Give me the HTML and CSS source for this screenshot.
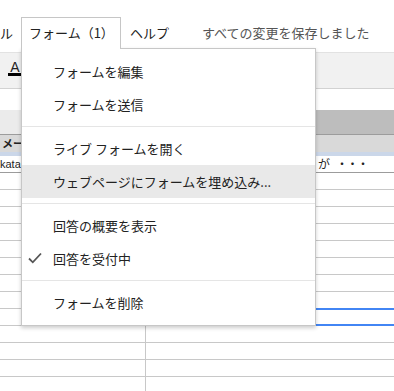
FILE: index.html
```html
<!DOCTYPE html>
<html lang="ja">
<head>
    <meta charset="UTF-8">
    <meta name="viewport" content="width=device-width, initial-scale=1.0">
    <title>フォーム</title>
    <link rel="stylesheet" href="styles.css">
</head>
<body>
    <div class="page">
        <!-- メニューバー -->
        <div class="menubar">
            <span class="mb-item">ル</span>
            <span class="mb-tab">フォーム（1）</span>
            <span class="mb-item help">ヘルプ</span>
            <span class="mb-status">すべての変更を保存しました</span>
        </div>

        <!-- ツールバー -->
        <div class="toolbar">
            <span class="fmt-a">A</span>
        </div>

        <div class="formula"></div>

        <div class="col-head">
            <div class="c1"></div>
            <div class="c2"></div>
        </div>

        <div class="head-row">
            <div class="c1">メール</div>
            <div class="c2"></div>
        </div>
        <div class="freeze"></div>

        <!-- シート -->
        <div class="sheet">
            <div class="row first">
                <div class="c1">kata</div>
                <div class="c2 long">入力内容に誤りが<span class="dots">・・・</span></div>
            </div>
            <div class="row"><div class="c1"></div><div class="c2"></div></div>
            <div class="row"><div class="c1"></div><div class="c2"></div></div>
            <div class="row"><div class="c1"></div><div class="c2"></div></div>
            <div class="row"><div class="c1"></div><div class="c2"></div></div>
            <div class="row"><div class="c1"></div><div class="c2"></div></div>
            <div class="row"><div class="c1"></div><div class="c2"></div></div>
            <div class="row"><div class="c1"></div><div class="c2"></div></div>
            <div class="row"><div class="c1"></div><div class="c2"></div></div>
            <div class="row"><div class="c1"></div><div class="c2 sel"></div></div>
            <div class="row"><div class="c1"></div><div class="c2"></div></div>
            <div class="row"><div class="c1"></div><div class="c2"></div></div>
            <div class="row"><div class="c1"></div><div class="c2"></div></div>
            <div class="row"><div class="c1"></div><div class="c2"></div></div>
        </div>

        <!-- ドロップダウンメニュー -->
        <div class="dropdown">
            <div class="dd-item">フォームを編集</div>
            <div class="dd-item">フォームを送信</div>
            <div class="dd-sep"></div>
            <div class="dd-item">ライブ フォームを開く</div>
            <div class="dd-item hover">ウェブページにフォームを埋め込み...</div>
            <div class="dd-sep"></div>
            <div class="dd-item">回答の概要を表示</div>
            <div class="dd-item">
                <svg class="check" width="14" height="12" viewBox="0 0 14 12">
                    <polyline points="1,6.5 4.8,10.3 13,1.5" fill="none" stroke="#555" stroke-width="1.8"/>
                </svg>
                回答を受付中
            </div>
            <div class="dd-sep"></div>
            <div class="dd-item">フォームを削除</div>
        </div>
    </div>
</body>
</html>
```

FILE: styles.css
```css
body {
    margin: 0;
    font-family: "Noto Sans CJK JP", "Noto Sans", sans-serif;
    background-color: #fff;
    color: #222;
    overflow: hidden;
}
.page {
    position: relative;
    width: 394px;
    height: 391px;
    overflow: hidden;
}
.menubar {
    display: flex;
    align-items: flex-start;
    height: 52px;
    padding-top: 17px;
    box-sizing: border-box;
    font-size: 13px;
    line-height: 31px;
    white-space: nowrap;
}
.mb-tab {
    position: relative;
    z-index: 2;
    margin-left: 8px;
    width: 100px;
    height: 32px;
    box-sizing: border-box;
    padding-left: 7px;
    border: 1px solid #c6c6c6;
    border-bottom: none;
    background-color: #fff;
    line-height: 30px;
}
.help {
    margin-left: 9px;
}
.mb-status {
    margin-left: 33px;
    color: #555;
}
.toolbar {
    display: flex;
    align-items: flex-start;
    height: 37px;
    box-sizing: border-box;
    padding: 8px 0 0 8px;
    background-color: #f1f1f1;
    border-top: 1px solid #e2e2e2;
    border-bottom: 1px solid #d2d2d2;
}
.fmt-a {
    display: block;
    width: 14px;
    text-align: center;
    font-family: "Liberation Sans", Arial, sans-serif;
    font-size: 14px;
    line-height: 12px;
    color: #222;
    border-bottom: 3px solid #000;
}
.formula {
    height: 21px;
}
.col-head {
    display: flex;
    height: 25px;
    box-sizing: border-box;
    border-bottom: 1px solid #9c9c9c;
}
.col-head .c1 {
    flex: none;
    width: 146px;
    background-color: #ebebeb;
}
.col-head .c2 {
    flex: 1;
    background-color: #bdbdbd;
}
.head-row {
    display: flex;
    height: 17px;
    background-color: #d9d9d9;
    font-size: 11px;
    line-height: 17px;
}
.head-row .c1 {
    flex: none;
    width: 146px;
    padding-left: 2px;
    box-sizing: border-box;
    font-weight: bold;
}
.freeze {
    height: 4px;
    background-color: #cbd7e9;
}
.row {
    display: flex;
    height: 17px;
    box-sizing: border-box;
    border-bottom: 1px solid #c8c8c8;
    font-family: "Liberation Sans", "Noto Sans CJK JP", sans-serif;
    font-size: 11px;
    line-height: 17px;
    white-space: nowrap;
}
.row.first {
    border-bottom-color: #9c9c9c;
}
.row .c1 {
    flex: none;
    width: 146px;
    box-sizing: border-box;
    border-right: 1px solid #c8c8c8;
    overflow: hidden;
}
.row .c2 {
    flex: none;
    width: 260px;
}
.row .long {
    padding-left: 88px;
    box-sizing: border-box;
    font-family: "Noto Sans CJK JP", sans-serif;
    font-size: 12px;
    line-height: 16px;
}
.dots {
    padding-left: 6px;
    letter-spacing: -1.5px;
}
.sel {
    outline: 2px solid #4285f4;
    outline-offset: -1px;
}
.dropdown {
    position: absolute;
    z-index: 1;
    top: 48px;
    left: 21px;
    width: 295px;
    box-sizing: border-box;
    padding: 6px 0;
    background-color: #fff;
    border: 1px solid rgba(0, 0, 0, 0.22);
    box-shadow: 0 2px 4px rgba(0, 0, 0, 0.2);
    font-size: 13px;
}
.dd-item {
    position: relative;
    height: 33px;
    line-height: 33px;
    padding-left: 31px;
    color: #222;
    white-space: nowrap;
}
.dd-item.hover {
    background-color: #e9e9e9;
}
.check {
    position: absolute;
    left: 6px;
    top: 10px;
}
.dd-sep {
    margin: 5px 0;
    border-top: 1px solid #e5e5e5;
}
```
